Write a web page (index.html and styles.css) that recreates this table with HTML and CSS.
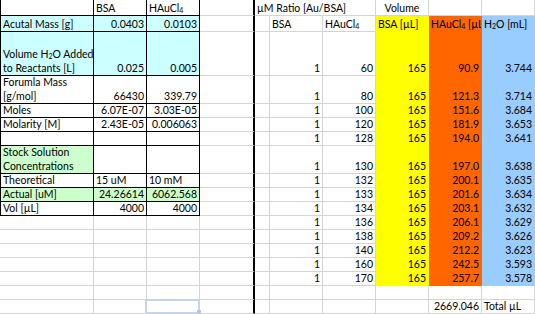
FILE: index.html
```html
<!DOCTYPE html>
<html>
<head>
<meta charset="utf-8">
<link rel="stylesheet" href="styles.css">
</head>
<body>
<div class="sheet">
  <!-- row 1 -->
  <div class="c bk first"></div>
  <div class="c bk">BSA</div>
  <div class="c bk"><span>HAuCl<sub>4</sub></span></div>
  <div class="c thick"></div>
  <div class="c nr">µM Ratio [Au/BSA]</div>
  <div class="c nr"></div>
  <div class="c"></div>
  <div class="c ctr">Volume</div>
  <div class="c"></div>
  <div class="c"></div>
  <!-- row 2 -->
  <div class="c bk first cy">Acutal Mass [g]</div>
  <div class="c bk cy r">0.0403</div>
  <div class="c bk cy r">0.0103</div>
  <div class="c thick"></div>
  <div class="c"></div>
  <div class="c">BSA</div>
  <div class="c"><span>HAuCl<sub>4</sub></span></div>
  <div class="c y">BSA [µL]</div>
  <div class="c o clip"><span>HAuCl<sub>4</sub> [µL</span></div>
  <div class="c b"><span>H<sub>2</sub>O [mL]</span></div>
  <!-- row 3 -->
  <div class="c bk first cy"><span>Volume H<sub>2</sub>O Added<br>to Reactants [L]</span></div>
  <div class="c bk cy r">0.025</div>
  <div class="c bk cy r">0.005</div>
  <div class="c thick"></div>
  <div class="c"></div>
  <div class="c r">1</div>
  <div class="c r">60</div>
  <div class="c y r">165</div>
  <div class="c o r">90.9</div>
  <div class="c b r">3.744</div>
  <!-- row 4 -->
  <div class="c bk first"><span>Forumla Mass<br>[g/mol]</span></div>
  <div class="c bk r">66430</div>
  <div class="c bk r">339.79</div>
  <div class="c thick"></div>
  <div class="c"></div>
  <div class="c r">1</div>
  <div class="c r">80</div>
  <div class="c y r">165</div>
  <div class="c o r">121.3</div>
  <div class="c b r">3.714</div>
  <!-- row 5 -->
  <div class="c bk first">Moles</div>
  <div class="c bk r">6.07E-07</div>
  <div class="c bk r">3.03E-05</div>
  <div class="c thick"></div>
  <div class="c"></div>
  <div class="c r">1</div>
  <div class="c r">100</div>
  <div class="c y r">165</div>
  <div class="c o r">151.6</div>
  <div class="c b r">3.684</div>
  <!-- row 6 -->
  <div class="c bk first">Molarity [M]</div>
  <div class="c bk r">2.43E-05</div>
  <div class="c bk r">0.006063</div>
  <div class="c thick"></div>
  <div class="c"></div>
  <div class="c r">1</div>
  <div class="c r">120</div>
  <div class="c y r">165</div>
  <div class="c o r">181.9</div>
  <div class="c b r">3.653</div>
  <!-- row 7 -->
  <div class="c bk first"></div>
  <div class="c bk"></div>
  <div class="c bk"></div>
  <div class="c thick"></div>
  <div class="c"></div>
  <div class="c r">1</div>
  <div class="c r">128</div>
  <div class="c y r">165</div>
  <div class="c o r">194.0</div>
  <div class="c b r">3.641</div>
  <!-- row 8 -->
  <div class="c bk first gr"><span>Stock Solution<br>Concentrations</span></div>
  <div class="c bk"></div>
  <div class="c bk"></div>
  <div class="c thick"></div>
  <div class="c"></div>
  <div class="c r">1</div>
  <div class="c r">130</div>
  <div class="c y r">165</div>
  <div class="c o r">197.0</div>
  <div class="c b r">3.638</div>
  <!-- row 9 -->
  <div class="c bk first">Theoretical</div>
  <div class="c bk">15 uM</div>
  <div class="c bk">10 mM</div>
  <div class="c thick"></div>
  <div class="c"></div>
  <div class="c r">1</div>
  <div class="c r">132</div>
  <div class="c y r">165</div>
  <div class="c o r">200.1</div>
  <div class="c b r">3.635</div>
  <!-- row 10 -->
  <div class="c bk first gr">Actual [uM]</div>
  <div class="c bk gr r">24.26614</div>
  <div class="c bk gr r">6062.568</div>
  <div class="c thick"></div>
  <div class="c"></div>
  <div class="c r">1</div>
  <div class="c r">133</div>
  <div class="c y r">165</div>
  <div class="c o r">201.6</div>
  <div class="c b r">3.634</div>
  <!-- row 11 -->
  <div class="c bk first">Vol [µL]</div>
  <div class="c bk r">4000</div>
  <div class="c bk r">4000</div>
  <div class="c thick"></div>
  <div class="c"></div>
  <div class="c r">1</div>
  <div class="c r">134</div>
  <div class="c y r">165</div>
  <div class="c o r">203.1</div>
  <div class="c b r">3.632</div>
  <!-- row 12 -->
  <div class="c"></div>
  <div class="c"></div>
  <div class="c"></div>
  <div class="c thick"></div>
  <div class="c"></div>
  <div class="c r">1</div>
  <div class="c r">136</div>
  <div class="c y r">165</div>
  <div class="c o r">206.1</div>
  <div class="c b r">3.629</div>
  <!-- row 13 -->
  <div class="c"></div>
  <div class="c"></div>
  <div class="c"></div>
  <div class="c thick"></div>
  <div class="c"></div>
  <div class="c r">1</div>
  <div class="c r">138</div>
  <div class="c y r">165</div>
  <div class="c o r">209.2</div>
  <div class="c b r">3.626</div>
  <!-- row 14 -->
  <div class="c"></div>
  <div class="c"></div>
  <div class="c"></div>
  <div class="c thick"></div>
  <div class="c"></div>
  <div class="c r">1</div>
  <div class="c r">140</div>
  <div class="c y r">165</div>
  <div class="c o r">212.2</div>
  <div class="c b r">3.623</div>
  <!-- row 15 -->
  <div class="c"></div>
  <div class="c"></div>
  <div class="c"></div>
  <div class="c thick"></div>
  <div class="c"></div>
  <div class="c r">1</div>
  <div class="c r">160</div>
  <div class="c y r">165</div>
  <div class="c o r">242.5</div>
  <div class="c b r">3.593</div>
  <!-- row 16 -->
  <div class="c"></div>
  <div class="c"></div>
  <div class="c"></div>
  <div class="c thick"></div>
  <div class="c"></div>
  <div class="c r">1</div>
  <div class="c r">170</div>
  <div class="c y r">165</div>
  <div class="c o r">257.7</div>
  <div class="c b r">3.578</div>
  <!-- row 17 -->
  <div class="c"></div>
  <div class="c"></div>
  <div class="c"></div>
  <div class="c thick"></div>
  <div class="c"></div>
  <div class="c"></div>
  <div class="c"></div>
  <div class="c"></div>
  <div class="c"></div>
  <div class="c"></div>
  <!-- row 18 -->
  <div class="c"></div>
  <div class="c"></div>
  <div class="c sel"></div>
  <div class="c thick"></div>
  <div class="c"></div>
  <div class="c"></div>
  <div class="c"></div>
  <div class="c"></div>
  <div class="c r">2669.046</div>
  <div class="c">Total µL</div>
</div>
</body>
</html>
```

FILE: styles.css
```css
* { box-sizing: border-box; }
html, body { margin: 0; padding: 0; background: #fff; }
body {
  width: 535px;
  height: 314px;
  overflow: hidden;
  font-family: Lato, "Open Sans", sans-serif;
  font-size: 10.5px;
  color: #000;
}
.sheet {
  display: grid;
  grid-template-columns: 94px 53px 53px 55px 15px 53px 53px 53px 53px 53px;
  grid-template-rows: 16px 16px 44px 28px 14px 14px 14px 28px repeat(10, 14px);
}
.c {
  position: relative;
  display: flex;
  align-items: flex-end;
  min-width: 0;
  padding: 0 2px 0 2px;
  border-right: 1px solid #d4d4d4;
  border-bottom: 1px solid #d4d4d4;
  line-height: 14px;
  white-space: nowrap;
}
.r { justify-content: flex-end; }
.ctr { justify-content: center; }
.bk { border-right-color: #000; border-bottom-color: #000; }
.first { border-left: 1px solid #000; }
.thick { border-right: 2px solid #000; }
.nr { border-right-color: transparent; }
.clip { overflow: hidden; padding-right: 0; }
.cy { background: #ccffff; }
.gr { background: #ccffcc; }
.y { background: #ffff00; border-color: transparent; }
.o { background: #ff6600; border-color: transparent; }
.b { background: #99ccff; border-color: transparent; }
sub {
  font-size: 7px;
  line-height: 0;
  vertical-align: -1px;
}
.sel::before {
  content: "";
  position: absolute;
  left: -2px;
  top: -1px;
  right: -1px;
  bottom: -1px;
  border: 2px solid #c5d4e9;
}
.sel::after {
  content: "";
  position: absolute;
  right: -2px;
  bottom: -1px;
  width: 4px;
  height: 4px;
  background: #b6c8e2;
}
```
